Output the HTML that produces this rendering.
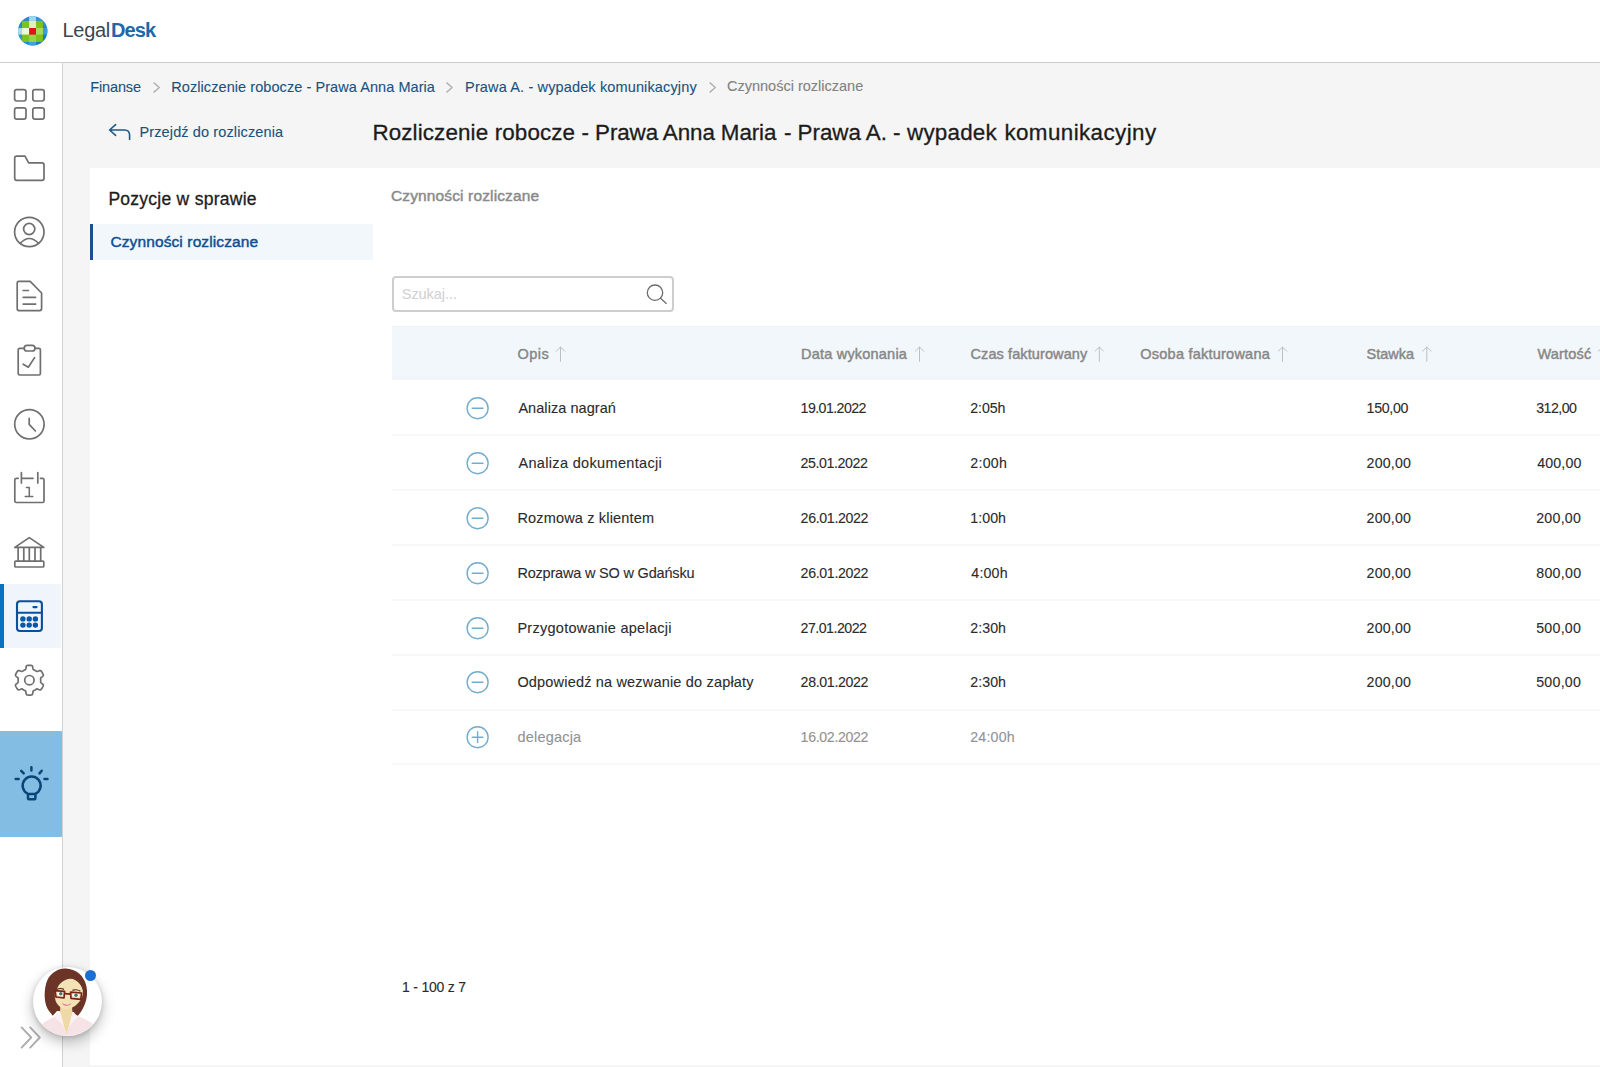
<!DOCTYPE html>
<html lang="pl">
<head>
<meta charset="utf-8">
<title>LegalDesk</title>
<style>
*{box-sizing:border-box;margin:0;padding:0}
html,body{width:1600px;height:1067px;overflow:hidden;background:#f5f5f5;font-family:"Liberation Sans",sans-serif;color:#232323}
.abs{position:absolute}
.t{position:absolute;white-space:nowrap;font-weight:normal;font-style:normal}
h1,h2,h3,p,a,label{margin:0;padding:0;font-weight:normal;font-size:inherit}
#header{left:0;top:0;width:1600px;height:63px;background:#fff;border-bottom:1px solid #cdcdcd}
#side{left:0;top:63px;width:63px;height:1004px;background:#fff;border-right:1px solid #d2d2d2}
#card{left:90px;top:168px;width:1510px;height:897px;background:#fff}
</style>
</head>
<body>
<header><div id="header" class="abs"></div>
<div id="side" class="abs"></div>
<div id="card" class="abs"></div>

<svg class="abs" style="left:12px;top:10px" width="40" height="40" viewBox="12 10 40 40">
 <defs><clipPath id="lc"><circle cx="32.7" cy="30.9" r="14.7"/></clipPath>
 <linearGradient id="lgb" x1="0" y1="0" x2="1" y2="1"><stop offset="0" stop-color="#1572bd"/><stop offset=".5" stop-color="#2f97dc"/><stop offset="1" stop-color="#0c5aa2"/></linearGradient></defs>
 <g clip-path="url(#lc)">
  <rect x="12" y="10" width="40" height="40" fill="url(#lgb)"/>
  <rect x="12" y="28" width="12" height="6.600" fill="#a9d9f2"/>
  <rect x="29.1" y="10" width="6.900" height="12" fill="#9fd6f3"/>
  <rect x="29.1" y="40" width="6.900" height="10" fill="#3aa3e6"/>
  <rect x="42" y="28" width="10" height="6.600" fill="#3a9be0"/>
  <rect x="22.1" y="20.900" width="20.800" height="21" fill="#7dc31d"/>
  <rect x="29.1" y="20.900" width="6.900" height="7.100" fill="#dff1be"/>
  <rect x="29.1" y="34.600" width="6.900" height="7.300" fill="#9cd24a"/>
  <rect x="22.1" y="28" width="7" height="6.600" fill="#eef7dc"/>
  <rect x="36" y="28" width="6.900" height="6.600" fill="#a8d960"/>
  <rect x="29.2" y="28" width="6.800" height="6.600" fill="#e2111b"/>
 </g>
</svg>



<div class="brand"><span class="t" style="left:62.6px;top:17px;font-size:20px;line-height:26px;color:#3b4651;letter-spacing:-0.350px">Legal</span>
<span class="t" style="left:110.9px;top:17px;font-size:20px;line-height:26px;color:#1a69a8;letter-spacing:-0.867px;font-weight:bold">Desk</span></div></header>
<nav><div class="abs" style="left:0;top:584px;width:60.500px;height:64px;background:#eff5fb"></div>
<div class="abs" style="left:0;top:584px;width:4px;height:64px;background:#0a72c2"></div>
<div class="abs" style="left:0;top:731px;width:62px;height:106px;background:#84bde4"></div>
<svg class="abs" style="left:0;top:0" width="130" height="1067" viewBox="0 0 130 1067" fill="none" stroke="#6f6f6f" stroke-width="1.7" stroke-linecap="round" stroke-linejoin="round">
 <!-- grid -->
 <rect x="14.6" y="89.6" width="11.4" height="11.4" rx="2.2"/>
 <rect x="32.8" y="89.6" width="11.4" height="11.4" rx="2.2"/>
 <rect x="14.6" y="107.8" width="11.4" height="11.4" rx="2.2"/>
 <rect x="32.8" y="107.8" width="11.4" height="11.4" rx="2.2"/>
 <!-- folder -->
 <path d="M16.8 156.1 H25 L28.6 162.8 H42 Q44 162.8 44 164.8 V178.3 Q44 180.3 42 180.3 H16.8 Q14.7 180.3 14.7 178.3 V158.1 Q14.7 156.1 16.8 156.1 Z"/>
 <!-- user -->
 <circle cx="29.3" cy="232" r="14.7"/>
 <circle cx="29.2" cy="229" r="5.6"/>
 <path d="M20.2 243.4 Q29.2 233.6 38.6 243.4"/>
 <!-- doc -->
 <path d="M18.8 281.4 H30.2 L41.6 293 V308.6 Q41.600 310.600 39.600 310.600 H18.8 Q17.2 310.600 17.200 308.600 V283 Q17.200 281.400 18.800 281.400 Z"/>
 <path d="M23.2 290.5 H28.4 M23.2 297.3 H35.6 M23.2 304.1 H35.6"/>
 <!-- clipboard -->
 <path d="M24 348.400 H19.800 Q18.200 348.400 18.200 350 V373.400 Q18.200 375 19.800 375 H38.800 Q40.400 375 40.400 373.400 V350 Q40.400 348.400 38.800 348.400 H35"/>
 <rect x="24.2" y="345.4" width="10.8" height="5.6" rx="2.8"/>
 <path d="M23.2 364.2 L28.3 367.2 L34.6 357.6"/>
 <!-- clock -->
 <circle cx="29.4" cy="424.3" r="14.7"/>
 <path d="M29.2 418.400 V424.400 L35.400 431"/>
 <!-- calendar -->
 <path d="M18.200 478.300 H16.400 Q14.800 478.300 14.800 479.900 V500.900 Q14.800 502.500 16.400 502.500 H42.400 Q44 502.500 44 500.900 V479.900 Q44 478.300 42.400 478.300 H40.400"/>
 <path d="M21.4 472.600 V483 M37.800 472.600 V483 M21.4 478.300 H33"/>
 <path d="M26.4 487.600 H29.3 V496.600 M25.200 496.600 H32.800" stroke-width="1.5"/>
 <!-- bank -->
 <path d="M14.8 547.400 L29.3 537.600 L43.800 547.400 Z"/>
 <path d="M18.100 548 V561 M23.800 548 V561 M29.300 548 V561 M35 548 V561 M40.700 548 V561"/>
 <rect x="14.800" y="561.200" width="29" height="5.800" rx="1"/>
 <!-- calculator -->
 <g stroke="#0a4f9c" stroke-width="2.100">
  <rect x="17" y="601.200" width="24.900" height="29.800" rx="3"/>
  <path d="M17 612.700 H41.900"/>
  <path d="M33.400 607.100 H36.600"/>
 </g>
 <g fill="#0a56a6" stroke="none">
  <circle cx="22.900" cy="618.900" r="2.700"/><circle cx="29.200" cy="618.900" r="2.700"/><circle cx="35.400" cy="618.900" r="2.700"/>
  <circle cx="22.900" cy="625.100" r="2.700"/><circle cx="29.200" cy="625.100" r="2.700"/><circle cx="35.400" cy="625.100" r="2.700"/>
 </g>
 <!-- gear -->
 <circle cx="29.4" cy="680.200" r="4.700"/>
 <path d="M40.70 680.20 L40.70 680.50 L40.68 680.79 L40.67 681.09 L40.64 681.38 L40.60 681.67 L40.56 681.97 L40.62 682.28 L40.92 682.65 L41.43 683.09 L42.05 683.59 L42.66 684.13 L43.12 684.66 L43.34 685.14 L43.31 685.54 L43.17 685.90 L43.01 686.26 L42.85 686.61 L42.68 686.96 L42.49 687.31 L42.30 687.65 L42.10 687.99 L41.90 688.32 L41.68 688.64 L41.45 688.96 L41.22 689.27 L40.98 689.58 L40.64 689.80 L40.12 689.85 L39.43 689.72 L38.66 689.46 L37.91 689.17 L37.28 688.95 L36.81 688.88 L36.51 688.98 L36.28 689.16 L36.04 689.34 L35.80 689.51 L35.55 689.68 L35.30 689.83 L35.05 689.99 L34.79 690.13 L34.53 690.27 L34.26 690.40 L34.00 690.52 L33.72 690.64 L33.45 690.75 L33.21 690.96 L33.04 691.40 L32.91 692.06 L32.79 692.85 L32.63 693.65 L32.40 694.31 L32.09 694.74 L31.73 694.92 L31.34 694.97 L30.96 695.02 L30.57 695.05 L30.18 695.08 L29.79 695.09 L29.40 695.10 L29.01 695.09 L28.62 695.08 L28.23 695.05 L27.84 695.02 L27.46 694.97 L27.07 694.92 L26.71 694.74 L26.40 694.31 L26.17 693.65 L26.01 692.85 L25.89 692.06 L25.76 691.40 L25.59 690.96 L25.35 690.75 L25.08 690.64 L24.80 690.52 L24.54 690.40 L24.27 690.27 L24.01 690.13 L23.75 689.99 L23.50 689.83 L23.25 689.68 L23.00 689.51 L22.76 689.34 L22.52 689.16 L22.29 688.98 L21.99 688.88 L21.52 688.95 L20.89 689.17 L20.14 689.46 L19.37 689.72 L18.68 689.85 L18.16 689.80 L17.82 689.58 L17.58 689.27 L17.35 688.96 L17.12 688.64 L16.90 688.32 L16.70 687.99 L16.50 687.65 L16.31 687.31 L16.12 686.96 L15.95 686.61 L15.79 686.26 L15.63 685.90 L15.49 685.54 L15.46 685.14 L15.68 684.66 L16.14 684.13 L16.75 683.59 L17.37 683.09 L17.88 682.65 L18.18 682.28 L18.24 681.97 L18.20 681.67 L18.16 681.38 L18.13 681.09 L18.12 680.79 L18.10 680.50 L18.10 680.20 L18.10 679.90 L18.12 679.61 L18.13 679.31 L18.16 679.02 L18.20 678.73 L18.24 678.43 L18.18 678.12 L17.88 677.75 L17.37 677.31 L16.75 676.81 L16.14 676.27 L15.68 675.74 L15.46 675.26 L15.49 674.86 L15.63 674.50 L15.79 674.14 L15.95 673.79 L16.12 673.44 L16.31 673.09 L16.50 672.75 L16.70 672.41 L16.90 672.08 L17.12 671.76 L17.35 671.44 L17.58 671.13 L17.82 670.82 L18.16 670.60 L18.68 670.55 L19.37 670.68 L20.14 670.94 L20.89 671.23 L21.52 671.45 L21.99 671.52 L22.29 671.42 L22.52 671.24 L22.76 671.06 L23.00 670.89 L23.25 670.72 L23.50 670.57 L23.75 670.41 L24.01 670.27 L24.27 670.13 L24.54 670.00 L24.80 669.88 L25.08 669.76 L25.35 669.65 L25.59 669.44 L25.76 669.00 L25.89 668.34 L26.01 667.55 L26.17 666.75 L26.40 666.09 L26.71 665.66 L27.07 665.48 L27.46 665.43 L27.84 665.38 L28.23 665.35 L28.62 665.32 L29.01 665.31 L29.40 665.30 L29.79 665.31 L30.18 665.32 L30.57 665.35 L30.96 665.38 L31.34 665.43 L31.73 665.48 L32.09 665.66 L32.40 666.09 L32.63 666.75 L32.79 667.55 L32.91 668.34 L33.04 669.00 L33.21 669.44 L33.45 669.65 L33.72 669.76 L34.00 669.88 L34.26 670.00 L34.53 670.13 L34.79 670.27 L35.05 670.41 L35.30 670.57 L35.55 670.72 L35.80 670.89 L36.04 671.06 L36.28 671.24 L36.51 671.42 L36.81 671.52 L37.28 671.45 L37.91 671.23 L38.66 670.94 L39.43 670.68 L40.12 670.55 L40.64 670.60 L40.98 670.82 L41.22 671.13 L41.45 671.44 L41.68 671.76 L41.90 672.08 L42.10 672.41 L42.30 672.75 L42.49 673.09 L42.68 673.44 L42.85 673.79 L43.01 674.14 L43.17 674.50 L43.31 674.86 L43.34 675.26 L43.12 675.74 L42.66 676.27 L42.05 676.81 L41.43 677.31 L40.92 677.75 L40.62 678.12 L40.56 678.43 L40.60 678.73 L40.64 679.02 L40.67 679.31 L40.68 679.61 L40.70 679.90 Z"/>
 <!-- bulb -->
 <g stroke="#0a4577" stroke-width="2.500">
  <path d="M28 793.800 A9 9 0 1 1 35.300 793.800"/>
  <rect x="28" y="793.900" width="7.400" height="5.300" rx="1"/>
  <path d="M31.400 767.300 V770.400 M21.200 770.800 L23.700 773.400 M41.700 770.800 L39.500 773.400 M15.700 778.900 H18.600 M44.500 778.900 H47.500"/>
 </g>
 <!-- chevrons -->
 <path d="M21.600 1027.400 L31.200 1037.500 L21.600 1047.600 M30.200 1027.400 L39.800 1037.500 L30.200 1047.600" stroke="#adadad" stroke-width="1.900"/>
</svg>

<div class="abs" style="left:33.300px;top:967px;width:68.800px;height:68.800px;border-radius:50%;background:#fff;box-shadow:0 6px 14px rgba(0,0,0,.26),0 1px 5px rgba(0,0,0,.14)"></div>
<svg class="abs" style="left:33.300px;top:967px" width="68.800" height="68.800" viewBox="0 0 68.800 68.800">
 <defs><clipPath id="av"><circle cx="34.4" cy="34.4" r="34.4"/></clipPath></defs>
 <g clip-path="url(#av)">
  <!-- hair back -->
  <path d="M33 1.400 C24 1 15.500 7 13 17 C10.500 27 11.500 38 16 44 L19.800 48.800 L24 44 L41 45 L43.200 50.600 C48 46 53 38 54 28 C55 16 49 6 40 3 C37.500 2 35 1.500 33 1.400 Z" fill="#6b3426"/>
  <!-- shirt -->
  <path d="M4 62 C8 56 16 52.500 26 47.500 L33.300 66.500 L41 47.500 C50 51 60 55 65 62 L64 72 H5 Z" fill="#f5e3e6"/>
  <!-- neck -->
  <path d="M27.300 38 L39 38 L39.500 48 L33.500 67 L27 48 Z" fill="#efd9a6"/>
  <!-- collar -->
  <path d="M27.200 44.600 L20.600 49.400 L31 58.500 Z M39.400 45 L45.600 49.600 L36 59 Z" fill="#fbf1f2"/>
  <!-- face -->
  <path d="M34.800 11 C30 11.500 26 14.500 23.500 19 C21.500 23 21.300 29 22.500 33.500 C24 38 28.500 42.200 33.300 42.200 C39 42 45 37.500 48 32.500 C50.500 28 50.500 23 48.500 19.500 C46 14.500 40.500 10.800 34.800 11 Z" fill="#f4e1b6"/>
  <!-- fringe -->
  <path d="M22 27 C20 18 25 8 36 7.500 C45 7.500 51.500 14 51 26 C49.500 19 45.500 13.500 39.500 11.600 C34 11.500 27.500 14.500 24.600 20.500 C23 23.500 22.300 25 22 27 Z" fill="#6b3426"/>
  <!-- eyes -->
  <ellipse cx="27.400" cy="26.700" rx="3.100" ry="2" fill="#fff"/><ellipse cx="42.600" cy="28.300" rx="3.100" ry="2" fill="#fff"/>
  <circle cx="27.800" cy="26.700" r="1.800" fill="#50756f"/><circle cx="43" cy="28.300" r="1.800" fill="#50756f"/>
  <path d="M23.400 22.800 Q27 20.400 31 22.400 M39.400 23.400 Q43.500 21.800 47.400 24.200" stroke="#4a2317" stroke-width="1.200" fill="none"/>
  <!-- glasses -->
  <g fill="none" stroke="#7a2418" stroke-width="1.700" stroke-linejoin="round">
   <path d="M22 23.600 L31.600 24.400 L31 31 L23 30 Z"/>
   <path d="M37.600 25.200 L48.600 26 L47.800 32.400 L38 31.400 Z"/>
   <path d="M31.600 26.600 L37.600 27.200"/>
  </g>
  <!-- mouth -->
  <path d="M28.600 36.200 Q33.500 41.200 38.600 36.400 Q33.500 38 28.600 36.200 Z" fill="#d7647c"/>
  <path d="M29.800 36.600 Q33.500 38.600 37.400 36.800 Q33.500 37.600 29.800 36.600 Z" fill="#fff"/>
 </g>
</svg>
<div class="abs" style="left:84.900px;top:969.500px;width:11.200px;height:11.200px;border-radius:50%;background:#1b6fd1"></div>
</nav>
<main>

<div class="abs" style="left:90px;top:224px;width:283px;height:36px;background:#f2f7fc"></div>
<div class="abs" style="left:90px;top:224px;width:3px;height:36px;background:#1b4f8e"></div>
<div class="abs" style="left:392px;top:276px;width:282px;height:35.500px;border:2px solid #cecece;border-radius:4px;background:#fff"></div>
<div class="abs" style="left:392px;top:326px;width:1208px;height:54px;background:#f2f7fc"></div>
<div class="abs" style="left:392px;top:376px;width:1208px;height:4px;background:#f1f4f8"></div>
<div class="abs" style="left:392px;top:326px;width:1208px;height:1px;background:#eef2f6"></div>
<div class="abs" style="left:392px;top:434px;width:1208px;height:2px;background:#f7f8f8"></div>
<div class="abs" style="left:392px;top:489px;width:1208px;height:2px;background:#f7f8f8"></div>
<div class="abs" style="left:392px;top:544px;width:1208px;height:2px;background:#f7f8f8"></div>
<div class="abs" style="left:392px;top:599px;width:1208px;height:2px;background:#f7f8f8"></div>
<div class="abs" style="left:392px;top:654px;width:1208px;height:2px;background:#f7f8f8"></div>
<div class="abs" style="left:392px;top:709px;width:1208px;height:2px;background:#f7f8f8"></div>
<div class="abs" style="left:392px;top:763px;width:1208px;height:2px;background:#f7f8f8"></div>
<!-- breadcrumb chevrons -->
<svg class="abs" style="left:0;top:0;pointer-events:none" width="1600" height="1067" viewBox="0 0 1600 1067" fill="none" stroke-linecap="round" stroke-linejoin="round">
 <g stroke="#b0b0b0" stroke-width="1.4">
  <path d="M154 82.900 L159.300 87.500 L154 92.100"/>
  <path d="M446.800 82.900 L452.100 87.500 L446.800 92.100"/>
  <path d="M710 82.900 L715.300 87.500 L710 92.100"/>
 </g>
 <!-- back arrow -->
 <path d="M115.600 124.600 L109.600 130 L115.600 135.400 M109.800 130 H124.400 Q129.600 130 129.600 135.200 V139.400" stroke="#1d5a88" stroke-width="1.6"/>
 <!-- search icon -->
 <g stroke="#6c6c6c" stroke-width="1.3"><circle cx="655" cy="292.700" r="7.700"/><path d="M660.600 298.300 L666.200 303.400"/></g>
 <!-- sort arrows -->
 <g stroke="#bcc0c4" stroke-width="1" id="arrows">
 <path d="M560.5 361.400 V347.200 M556.3 351.200 L560.5 347 L564.7 351.200"/>
<path d="M919.5 361.400 V347.200 M915.3 351.200 L919.5 347 L923.7 351.200"/>
<path d="M1099.3 361.400 V347.200 M1095.1 351.200 L1099.3 347 L1103.5 351.200"/>
<path d="M1282.5 361.400 V347.200 M1278.3 351.200 L1282.5 347 L1286.7 351.200"/>
<path d="M1426.8 361.400 V347.200 M1422.6 351.200 L1426.8 347 L1431.0 351.200"/>
<path d="M1602.6 361.400 V347.200 M1598.3999999999999 351.200 L1602.6 347 L1606.8 351.200"/>

 </g>
 <!-- row icons -->
 <g stroke="#74acce" stroke-width="1.4" id="ricons">
 <circle cx="477.6" cy="408.2" r="10.500"/><path d="M472.200 408.2 H483"/>
<circle cx="477.6" cy="463.2" r="10.500"/><path d="M472.200 463.2 H483"/>
<circle cx="477.6" cy="518.2" r="10.500"/><path d="M472.200 518.2 H483"/>
<circle cx="477.6" cy="573.2" r="10.500"/><path d="M472.200 573.2 H483"/>
<circle cx="477.6" cy="628.2" r="10.500"/><path d="M472.200 628.2 H483"/>
<circle cx="477.6" cy="682.2" r="10.500"/><path d="M472.200 682.2 H483"/>
<circle cx="477.6" cy="737.2" r="10.500"/><path d="M472.200 737.2 H483"/><path d="M477.600 731.8 V742.6"/>

 </g>
</svg>
<nav class="crumbs"><span class="t" style="left:90.2px;top:78px;font-size:14.5px;line-height:19px;color:#19527f;letter-spacing:-0.117px;-webkit-text-stroke:0.1px">Finanse</span>
<span class="t" style="left:171.3px;top:78px;font-size:14.5px;line-height:19px;color:#19527f;letter-spacing:0.068px;-webkit-text-stroke:0.1px">Rozliczenie robocze - Prawa Anna Maria</span>
<span class="t" style="left:465.1px;top:78px;font-size:14.5px;line-height:19px;color:#19527f;letter-spacing:0.139px;-webkit-text-stroke:0.1px">Prawa A. - wypadek komunikacyjny</span>
<span class="t" style="left:727.0px;top:77px;font-size:14.5px;line-height:19px;color:#828282;letter-spacing:0.000px;-webkit-text-stroke:0.1px">Czynności rozliczane</span></nav>
<a><span class="t" style="left:139.5px;top:123px;font-size:14.5px;line-height:19px;color:#19527f;letter-spacing:0.119px;-webkit-text-stroke:0.1px">Przejdź do rozliczenia</span></a>
<h1><span class="t" style="left:372.4px;top:118px;font-size:22.4px;line-height:29px;color:#1c1c1c;letter-spacing:0.128px;-webkit-text-stroke:0.3px">Rozliczenie robocze</span>
<span class="t" style="left:581.6px;top:118px;font-size:22.4px;line-height:29px;color:#1c1c1c;letter-spacing:-0.106px;-webkit-text-stroke:0.3px">- Prawa Anna Maria</span>
<span class="t" style="left:784.0px;top:118px;font-size:22.4px;line-height:29px;color:#1c1c1c;letter-spacing:-0.033px;-webkit-text-stroke:0.3px">- Prawa A.</span>
<span class="t" style="left:892.9px;top:118px;font-size:22.4px;line-height:29px;color:#1c1c1c;letter-spacing:0.225px;-webkit-text-stroke:0.3px">- wypadek</span>
<span class="t" style="left:1004.4px;top:118px;font-size:22.4px;line-height:29px;color:#1c1c1c;letter-spacing:0.408px;-webkit-text-stroke:0.3px">komunikacyjny</span></h1>
<aside><h2><span class="t" style="left:108.4px;top:188px;font-size:17.5px;line-height:23px;color:#1c1c1c;letter-spacing:0.262px;-webkit-text-stroke:0.3px">Pozycje w sprawie</span></h2><span class="t" style="left:110.4px;top:232px;font-size:15.5px;line-height:20px;color:#0f4f91;letter-spacing:0.116px;-webkit-text-stroke:0.45px">Czynności rozliczane</span></aside>
<section><h3><span class="t" style="left:391.0px;top:186px;font-size:15.5px;line-height:20px;color:#8a8a8a;letter-spacing:0.132px;-webkit-text-stroke:0.45px">Czynności rozliczane</span></h3>
<label><span class="t" style="left:401.8px;top:285px;font-size:14.5px;line-height:19px;color:#d2d2d2;letter-spacing:-0.062px;-webkit-text-stroke:0.1px">Szukaj...</span></label>
<div role="table"><div role="row"><span class="t" style="left:517.5px;top:345px;font-size:14.5px;line-height:19px;color:#878787;letter-spacing:0.500px;-webkit-text-stroke:0.45px">Opis</span>
<span class="t" style="left:801.0px;top:345px;font-size:14.5px;line-height:19px;color:#878787;letter-spacing:0.208px;-webkit-text-stroke:0.45px">Data wykonania</span>
<span class="t" style="left:970.5px;top:345px;font-size:14.5px;line-height:19px;color:#878787;letter-spacing:0.100px;-webkit-text-stroke:0.45px">Czas fakturowany</span>
<span class="t" style="left:1140.3px;top:345px;font-size:14.5px;line-height:19px;color:#878787;letter-spacing:0.231px;-webkit-text-stroke:0.45px">Osoba fakturowana</span>
<span class="t" style="left:1366.5px;top:345px;font-size:14.5px;line-height:19px;color:#878787;letter-spacing:0.000px;-webkit-text-stroke:0.45px">Stawka</span>
<span class="t" style="left:1537.5px;top:345px;font-size:14.5px;line-height:19px;color:#878787;letter-spacing:0.167px;-webkit-text-stroke:0.45px">Wartość</span></div>
<div role="row"><span class="t" style="left:518.4px;top:399px;font-size:14.5px;line-height:19px;color:#2b2b2b;letter-spacing:0.054px;-webkit-text-stroke:0.1px">Analiza nagrań</span>
<span class="t" style="left:800.6px;top:399px;font-size:14.2px;line-height:18px;color:#2b2b2b;letter-spacing:-0.578px;-webkit-text-stroke:0.1px">19.01.2022</span>
<span class="t" style="left:970.3px;top:399px;font-size:14.2px;line-height:18px;color:#2b2b2b;letter-spacing:-0.125px;-webkit-text-stroke:0.1px">2:05h</span>
<span class="t" style="left:1366.6px;top:399px;font-size:14.2px;line-height:18px;color:#2b2b2b;letter-spacing:-0.300px;-webkit-text-stroke:0.1px">150,00</span>
<span class="t" style="left:1536.2px;top:399px;font-size:14.2px;line-height:18px;color:#2b2b2b;letter-spacing:-0.540px;-webkit-text-stroke:0.1px">312,00</span></div>
<div role="row"><span class="t" style="left:518.4px;top:454px;font-size:14.5px;line-height:19px;color:#2b2b2b;letter-spacing:0.337px;-webkit-text-stroke:0.1px">Analiza dokumentacji</span>
<span class="t" style="left:800.6px;top:454px;font-size:14.2px;line-height:18px;color:#2b2b2b;letter-spacing:-0.411px;-webkit-text-stroke:0.1px">25.01.2022</span>
<span class="t" style="left:970.3px;top:454px;font-size:14.2px;line-height:18px;color:#2b2b2b;letter-spacing:0.275px;-webkit-text-stroke:0.1px">2:00h</span>
<span class="t" style="left:1366.6px;top:454px;font-size:14.2px;line-height:18px;color:#2b2b2b;letter-spacing:0.180px;-webkit-text-stroke:0.1px">200,00</span>
<span class="t" style="left:1537.2px;top:454px;font-size:14.2px;line-height:18px;color:#2b2b2b;letter-spacing:0.160px;-webkit-text-stroke:0.1px">400,00</span></div>
<div role="row"><span class="t" style="left:517.4px;top:509px;font-size:14.5px;line-height:19px;color:#2b2b2b;letter-spacing:0.171px;-webkit-text-stroke:0.1px">Rozmowa z klientem</span>
<span class="t" style="left:800.6px;top:509px;font-size:14.2px;line-height:18px;color:#2b2b2b;letter-spacing:-0.344px;-webkit-text-stroke:0.1px">26.01.2022</span>
<span class="t" style="left:970.3px;top:509px;font-size:14.2px;line-height:18px;color:#2b2b2b;letter-spacing:0.050px;-webkit-text-stroke:0.1px">1:00h</span>
<span class="t" style="left:1366.6px;top:509px;font-size:14.2px;line-height:18px;color:#2b2b2b;letter-spacing:0.180px;-webkit-text-stroke:0.1px">200,00</span>
<span class="t" style="left:1536.2px;top:509px;font-size:14.2px;line-height:18px;color:#2b2b2b;letter-spacing:0.260px;-webkit-text-stroke:0.1px">200,00</span></div>
<div role="row"><span class="t" style="left:517.4px;top:564px;font-size:14.5px;line-height:19px;color:#2b2b2b;letter-spacing:-0.191px;-webkit-text-stroke:0.1px">Rozprawa w SO w Gdańsku</span>
<span class="t" style="left:800.6px;top:564px;font-size:14.2px;line-height:18px;color:#2b2b2b;letter-spacing:-0.344px;-webkit-text-stroke:0.1px">26.01.2022</span>
<span class="t" style="left:971.3px;top:564px;font-size:14.2px;line-height:18px;color:#2b2b2b;letter-spacing:0.200px;-webkit-text-stroke:0.1px">4:00h</span>
<span class="t" style="left:1366.6px;top:564px;font-size:14.2px;line-height:18px;color:#2b2b2b;letter-spacing:0.180px;-webkit-text-stroke:0.1px">200,00</span>
<span class="t" style="left:1536.2px;top:564px;font-size:14.2px;line-height:18px;color:#2b2b2b;letter-spacing:0.320px;-webkit-text-stroke:0.1px">800,00</span></div>
<div role="row"><span class="t" style="left:517.4px;top:619px;font-size:14.5px;line-height:19px;color:#2b2b2b;letter-spacing:0.276px;-webkit-text-stroke:0.1px">Przygotowanie apelacji</span>
<span class="t" style="left:800.6px;top:619px;font-size:14.2px;line-height:18px;color:#2b2b2b;letter-spacing:-0.522px;-webkit-text-stroke:0.1px">27.01.2022</span>
<span class="t" style="left:970.3px;top:619px;font-size:14.2px;line-height:18px;color:#2b2b2b;letter-spacing:0.050px;-webkit-text-stroke:0.1px">2:30h</span>
<span class="t" style="left:1366.6px;top:619px;font-size:14.2px;line-height:18px;color:#2b2b2b;letter-spacing:0.180px;-webkit-text-stroke:0.1px">200,00</span>
<span class="t" style="left:1536.2px;top:619px;font-size:14.2px;line-height:18px;color:#2b2b2b;letter-spacing:0.260px;-webkit-text-stroke:0.1px">500,00</span></div>
<div role="row"><span class="t" style="left:517.4px;top:673px;font-size:14.5px;line-height:19px;color:#2b2b2b;letter-spacing:0.181px;-webkit-text-stroke:0.1px">Odpowiedź na wezwanie do zapłaty</span>
<span class="t" style="left:800.6px;top:673px;font-size:14.2px;line-height:18px;color:#2b2b2b;letter-spacing:-0.344px;-webkit-text-stroke:0.1px">28.01.2022</span>
<span class="t" style="left:970.3px;top:673px;font-size:14.2px;line-height:18px;color:#2b2b2b;letter-spacing:0.050px;-webkit-text-stroke:0.1px">2:30h</span>
<span class="t" style="left:1366.6px;top:673px;font-size:14.2px;line-height:18px;color:#2b2b2b;letter-spacing:0.180px;-webkit-text-stroke:0.1px">200,00</span>
<span class="t" style="left:1536.2px;top:673px;font-size:14.2px;line-height:18px;color:#2b2b2b;letter-spacing:0.260px;-webkit-text-stroke:0.1px">500,00</span></div>
<div role="row"><span class="t" style="left:517.4px;top:728px;font-size:14.5px;line-height:19px;color:#929292;letter-spacing:0.213px;-webkit-text-stroke:0.1px">delegacja</span>
<span class="t" style="left:800.6px;top:728px;font-size:14.2px;line-height:18px;color:#929292;letter-spacing:-0.344px;-webkit-text-stroke:0.1px">16.02.2022</span>
<span class="t" style="left:970.3px;top:728px;font-size:14.2px;line-height:18px;color:#929292;letter-spacing:0.180px;-webkit-text-stroke:0.1px">24:00h</span></div>
</div>
<p><span class="t" style="left:402.1px;top:978px;font-size:14px;line-height:18px;color:#2b2b2b;letter-spacing:-0.220px;-webkit-text-stroke:0.1px">1 - 100 z 7</span></p></section>
</main>
</body>
</html>
